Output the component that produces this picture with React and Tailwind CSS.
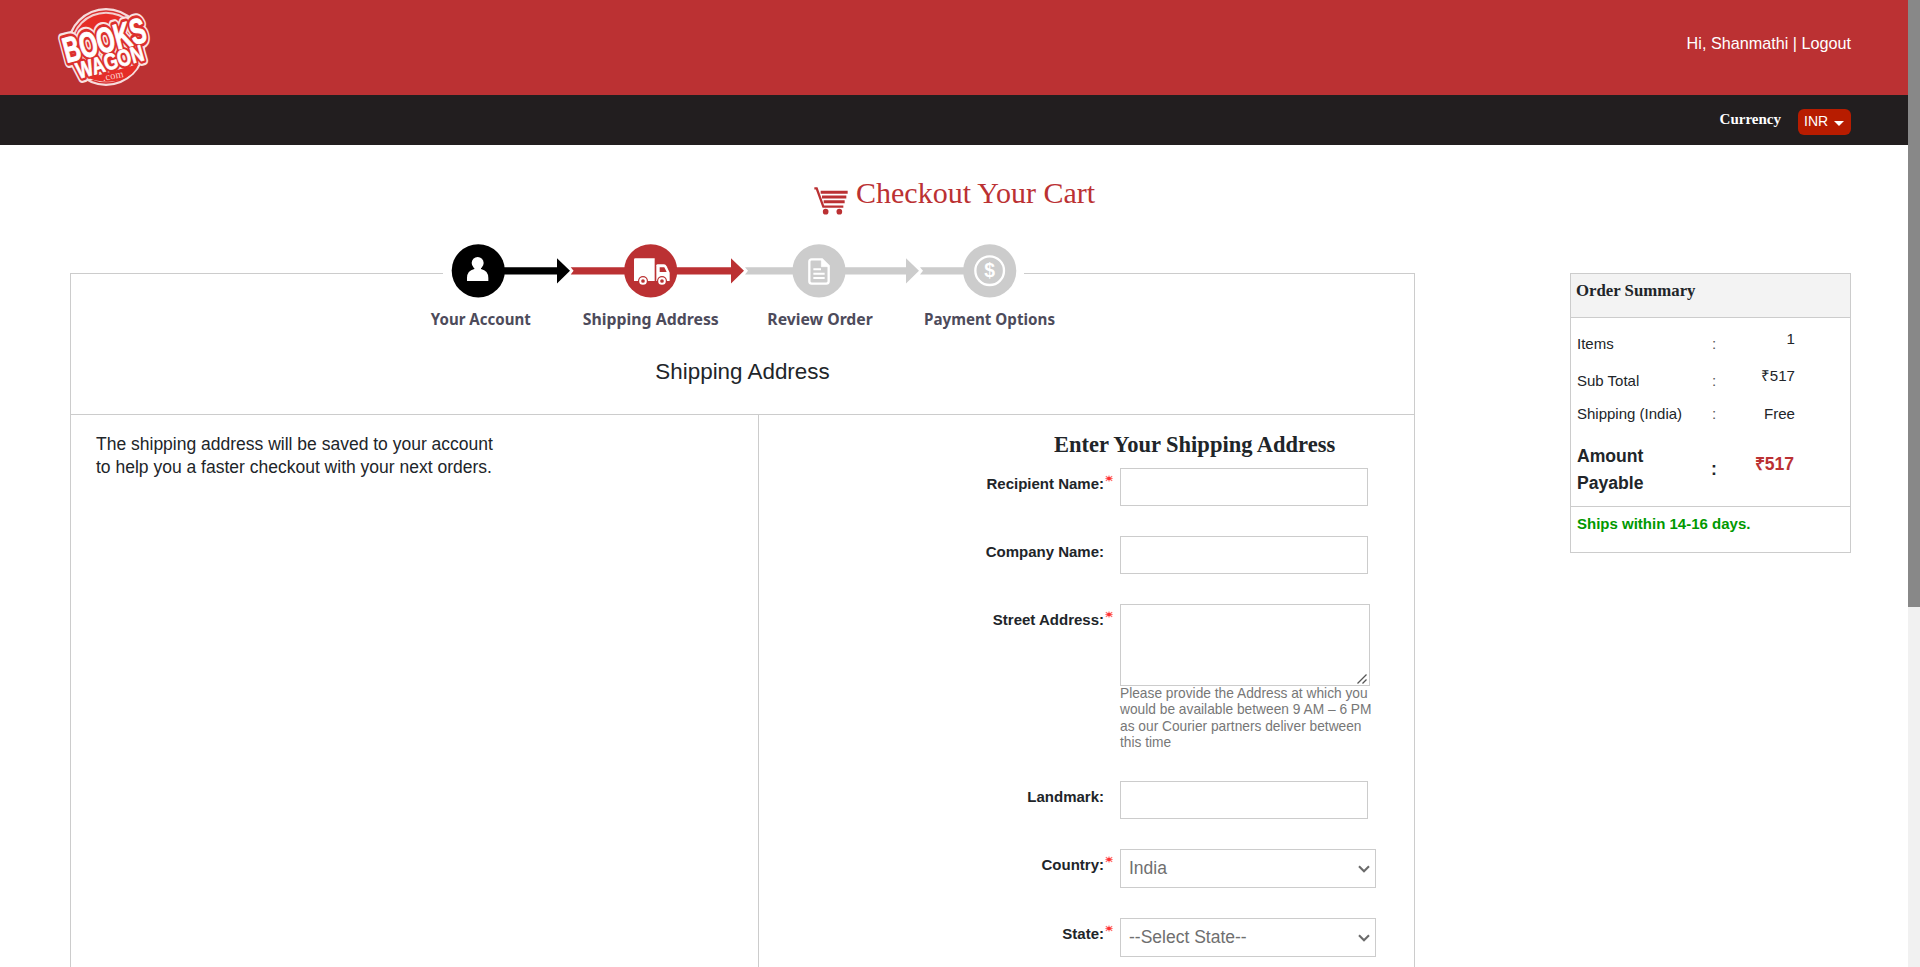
const sans = "font-['Liberation_Sans',Arial,sans-serif]";
const serif = "font-['Liberation_Serif','Times_New_Roman',serif]";

function Logo() {
  const books = { transform: 'translate(80 189) rotate(-15)', fontSize: 107, textLength: 254 };
  const wagon = { transform: 'translate(116 237) rotate(-16)', fontSize: 69, textLength: 208 };
  const word = (t, label, extra) => (
    <text {...t} {...extra} lengthAdjust="spacingAndGlyphs" strokeLinejoin="round">
      {label}
    </text>
  );
  return (
    <svg
      className="block overflow-visible"
      width="94"
      height="78"
      viewBox="51 24 282 234"
      fontFamily="Liberation Sans, Arial, sans-serif"
      fontWeight="700"
    >
      <circle cx="198" cy="141" r="117" fill="#f6dcdc" />
      <circle cx="198" cy="141" r="110" fill="#d8302f" />
      <circle cx="198" cy="141" r="106" fill="#f3cfcf" />
      <circle cx="198" cy="141" r="100" fill="#e52d27" />
      {word(books, 'BOOKS', { fill: '#f9e3e3', stroke: '#f9e3e3', strokeWidth: 33 })}
      {word(wagon, 'WAGON', { fill: '#f9e3e3', stroke: '#f9e3e3', strokeWidth: 29 })}
      {word(books, 'BOOKS', { fill: '#dc302d', stroke: '#dc302d', strokeWidth: 20 })}
      {word(wagon, 'WAGON', { fill: '#dc302d', stroke: '#dc302d', strokeWidth: 16 })}
      <path d="M146 234 L296 192 Q283 226 240 241 Q190 252 146 234Z" fill="#e52d27" />
      {word(books, 'BOOKS', { fill: '#fff', stroke: '#fff', strokeWidth: 3 })}
      {word(wagon, 'WAGON', { fill: '#fff', stroke: '#fff', strokeWidth: 2 })}
      <text
        transform="translate(190 243) rotate(-11)"
        fontSize="31"
        fontFamily="Liberation Serif, serif"
        fontWeight="400"
        fill="#fbd5d3"
        textLength="63"
      >
        .com
      </text>
    </svg>
  );
}

function CartIcon() {
  return (
    <svg className="block" width="34" height="28" viewBox="0 0 102 84" fill="none" stroke="#bb3133">
      <path d="M1 4 H8 L28 59 H88" strokeWidth="7" />
      <path d="M20 16 H101 M24 30 H97 M29 44 H92" strokeWidth="9" />
      <circle cx="35" cy="74" r="8.5" fill="#bb3133" stroke="none" />
      <circle cx="76" cy="74" r="8.5" fill="#bb3133" stroke="none" />
    </svg>
  );
}

function Steps() {
  return (
    <svg className="-mt-[34px] ml-[354px] block" width="640" height="95" viewBox="425 240 640 95">
      <rect x="443" y="240" width="581" height="60" fill="#fff" />
      <g fill="#000">
        <circle cx="478.3" cy="270.8" r="26.6" />
        <path d="M500 267.3H557V258.3L570 270.8L557 283.6V274.4H500Z" />
      </g>
      <g fill="#bb3133">
        <circle cx="650.7" cy="270.8" r="26.6" />
        <path d="M570.7 267.3H731V258.3L744 270.8L731 283.6V274.4H570.7L573.6 270.8Z" />
      </g>
      <g fill="#ccc">
        <circle cx="819" cy="270.8" r="26.6" />
        <circle cx="989.7" cy="270.8" r="26.6" />
        <path d="M745 267.3H906V258.3L919 270.8L906 283.6V274.4H745L748 270.8Z" />
        <path d="M920 267.3H980V274.4H920L923 270.8Z" />
      </g>
      <g transform="translate(410 230) scale(.33333)" fill="#fff">
        <circle cx="203" cy="99" r="18" />
        <path d="M193 108H213V117Q235 122 235 144V153H171V144Q171 122 193 117Z" />
        <path d="M676 85H734V153H672V89Q672 85 676 85Z" />
        <path d="M739 153V106Q739 103 743 103H762Q767 103 770 109L779 128V153Z" />
        <path d="M749 112H763L770 126H749Z" fill="#bb3133" />
        <circle cx="699" cy="153" r="15" fill="#bb3133" />
        <circle cx="756" cy="153" r="15" fill="#bb3133" />
        <circle cx="699" cy="153" r="8.5" fill="none" stroke="#fff" strokeWidth="6" />
        <circle cx="756" cy="153" r="8.5" fill="none" stroke="#fff" strokeWidth="6" />
      </g>
      <g transform="translate(740 230) scale(.33333)" fill="none" stroke="#fff">
        <path
          d="M215 88H246L266 108V154Q266 161 259 161H215Q208 161 208 154V95Q208 88 215 88Z"
          strokeWidth="7"
        />
        <path d="M244 88V110H266Z" fill="#fff" strokeWidth="2" />
        <path d="M220 118H243M220 131H254M220 144H254" strokeWidth="6" />
        <circle cx="749" cy="122" r="43" strokeWidth="7" />
        <text
          x="749"
          y="142"
          fontSize="58"
          fontWeight="700"
          textAnchor="middle"
          fill="#fff"
          stroke="none"
          fontFamily="Liberation Sans, Arial, sans-serif"
        >
          $
        </text>
      </g>
      <g fontFamily="Noto Sans, Tahoma, sans-serif" fontWeight="700" fontSize="15.2" fill="#4d4b5b">
        <text x="430.8" y="325" textLength="100" lengthAdjust="spacingAndGlyphs">
          Your Account
        </text>
        <text x="582.8" y="325" textLength="136" lengthAdjust="spacingAndGlyphs">
          Shipping Address
        </text>
        <text x="767.3" y="325" textLength="105.5" lengthAdjust="spacingAndGlyphs">
          Review Order
        </text>
        <text x="924" y="325" textLength="131" lengthAdjust="spacingAndGlyphs">
          Payment Options
        </text>
      </g>
    </svg>
  );
}

function Required() {
  return (
    <svg className="block" width="8" height="7" viewBox="0 0 8 7" stroke="#ff6a6a" strokeWidth="1.1">
      <path d="M4 .5V6.5M.8 1.2L7.2 5.8M7.2 1.2L.8 5.8M.4 3.5H7.6" />
      <circle cx="4" cy="3.5" r="1.7" fill="#f33" stroke="none" />
    </svg>
  );
}

function Field({ label, required, children }) {
  return (
    <div className="grid grid-cols-[345px_16px_1fr] items-start">
      <label className="pt-[6px] text-right text-[15px] leading-5 font-bold">{label}</label>
      <div className="pt-[7px] pl-px">{required && <Required />}</div>
      <div>{children}</div>
    </div>
  );
}

const TextBox = () => (
  <input type="text" className="block h-[38px] w-[248px] border border-[#ccc] bg-white px-2 outline-none" />
);

function AddressBox() {
  return (
    <div className="relative w-[250px]">
      <textarea className="block h-[82px] w-[250px] resize-none border border-[#ccc] bg-white outline-none" />
      <svg
        className="absolute right-[3px] bottom-[2px]"
        width="10"
        height="10"
        viewBox="0 0 10 10"
        fill="none"
        stroke="#555"
        strokeWidth="1.3"
      >
        <path d="M.5 9.5L9.5 .5M5.5 9.5L9.5 5.5" />
      </svg>
    </div>
  );
}

function SelectBox({ value }) {
  return (
    <div className="flex h-[39px] w-[256px] items-center justify-between border border-[#ccc] bg-white pr-[5px] pl-[8px] text-[17.5px] leading-[23px] text-[#6f6f6f]">
      <span>{value}</span>
      <svg width="12" height="8" viewBox="0 0 12 8" fill="none" stroke="#6b6b6b" strokeWidth="2.1">
        <path d="M1 1.3L6 6.3L11 1.3" />
      </svg>
    </div>
  );
}

function SummaryRow({ label, value, className, valueClass }) {
  return (
    <div className={'grid grid-cols-[135px_20px_63px] text-[15.1px] leading-5 ' + className}>
      <span className="text-[15px]">{label}</span>
      <span className="text-[#555]">:</span>
      <span className={'text-right ' + valueClass}>{value}</span>
    </div>
  );
}

function OrderSummary() {
  return (
    <aside className="h-[280px] w-[281px] border border-[#ccc]">
      <h3 className={'h-[44px] border-b border-[#ccc] bg-[#f3f3f3] pt-[7px] pl-[5px] text-[16.8px] leading-5 font-bold ' + serif}>
        Order Summary
      </h3>
      <div className="h-[189px] border-b border-[#ccc] pt-[16px] pl-[6px]">
        <SummaryRow label="Items" value="1" className="h-[37px]" valueClass="-mt-[5px]" />
        <SummaryRow label="Sub Total" value="₹517" className="h-[33px]" valueClass="-mt-[5px]" />
        <SummaryRow label="Shipping (India)" value="Free" className="h-[39px]" valueClass="" />
        <div className="grid grid-cols-[134px_20px_63px] text-[17.6px] leading-[27px] font-bold">
          <span className="pr-10">Amount Payable</span>
          <span className="pt-[13px]">:</span>
          <span className="pt-[8px] text-right text-[#bb3133]">₹517</span>
        </div>
      </div>
      <p className="pt-[7px] pl-[6px] text-[15px] leading-5 font-bold text-[#090]">Ships within 14-16 days.</p>
    </aside>
  );
}

export default function App() {
  return (
    <div className={'flex h-[967px] w-[1920px] overflow-hidden bg-white text-[#212529] ' + sans}>
      <div className="w-[1908px] shrink-0">
        <header>
          <div className="flex h-[95px] justify-between bg-[#bb3133] pr-[57px] pl-[57px]">
            <div className="pt-2">
              <Logo />
            </div>
            <p className="pt-[31px] text-[16.2px] leading-6 text-white">Hi, Shanmathi | Logout</p>
          </div>
          <div className="flex h-[50px] justify-end bg-[#221e1f] pr-[57px] text-white">
            <span className={'mr-[17px] pt-[14px] text-[15px] leading-5 font-bold ' + serif}>Currency</span>
            <button className="mt-[14px] flex h-[26px] w-[53px] items-center gap-[6px] rounded-[6px] bg-[#b71c00] pb-[2px] pl-[6px] text-sm leading-5">
              INR
              <svg className="mt-[4px]" width="10" height="5" viewBox="0 0 10 5" fill="#fff">
                <path d="M0 0H10L5 5Z" />
              </svg>
            </button>
          </div>
        </header>

        <div className="flex h-[128px] gap-[8px] pl-[814px]">
          <div className="pt-[42px]">
            <CartIcon />
          </div>
          <h1 className={'pt-[30px] text-[30px] leading-9 whitespace-nowrap text-[#bb3133] ' + serif}>Checkout Your Cart</h1>
        </div>

        <main className="flex items-start justify-between pr-[57px] pl-[70px]">
          <section className="w-[1345px] border border-[#ccc]">
            <div className="flow-root h-[141px] border-b border-[#ccc]">
              <Steps />
              <h2 className="mt-[22px] text-center text-[22.4px] leading-[30px]">Shipping Address</h2>
            </div>
            <div className="flex h-[800px]">
              <div className="w-[688px] shrink-0 border-r border-[#ccc] pt-[18px] pl-[25px]">
                <p className="text-[17.5px] leading-[23px]">
                  The shipping address will be saved to your account
                  <br />
                  to help you a faster checkout with your next orders.
                </p>
              </div>
              <form className="flex-1 pt-[17px]">
                <h3 className={'mb-[10px] ml-[295px] text-[22.5px] leading-[26px] font-bold ' + serif}>
                  Enter Your Shipping Address
                </h3>
                <div className="flex flex-col gap-[30px]">
                  <Field label="Recipient Name:" required>
                    <TextBox />
                  </Field>
                  <Field label="Company Name:">
                    <TextBox />
                  </Field>
                  <Field label="Street Address:" required>
                    <AddressBox />
                    <p className="h-[65px] w-[256px] text-[13.75px] leading-[16.4px] text-[#777]">
                      Please provide the Address at which you would be available between 9 AM – 6 PM as our Courier partners
                      deliver between this time
                    </p>
                  </Field>
                  <Field label="Landmark:">
                    <TextBox />
                  </Field>
                  <Field label="Country:" required>
                    <SelectBox value="India" />
                  </Field>
                  <Field label="State:" required>
                    <SelectBox value="--Select State--" />
                  </Field>
                </div>
              </form>
            </div>
          </section>
          <OrderSummary />
        </main>
      </div>
      <div className="w-3 shrink-0 bg-[#f1f1f1]">
        <div className="h-[607px] bg-[#888]" />
      </div>
    </div>
  );
}
